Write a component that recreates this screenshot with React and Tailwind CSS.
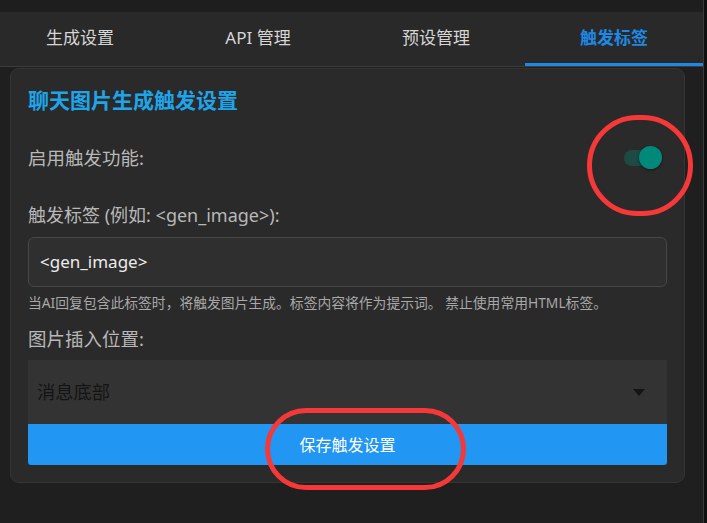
const tabs = ['生成设置', 'API 管理', '预设管理', '触发标签'];

function Toggle({ on }) {
  return (
    <div className="relative w-[38px] h-[24px] flex items-center">
      <div className={`w-[35px] h-[16px] rounded-full ${on ? 'bg-[#1e4a44]' : 'bg-[#555]'}`}></div>
      <div className="absolute right-0 top-0 w-[23px] h-[23px] rounded-full bg-[#00897b] shadow-[0_1px_3px_rgba(0,0,0,0.5)]"></div>
    </div>
  );
}

export default function App() {
  const active = 3;
  return (
    <div
      className="relative w-[707px] h-[523px] overflow-hidden bg-[#1f1f1f] flex"
      style={{ fontFamily: "'Noto Sans', 'Noto Sans CJK SC', sans-serif" }}
    >
      <div className="w-[703px] flex flex-col">
        <div className="h-[12px] bg-[#1e1e1e]"></div>
        {/* tab bar */}
        <div className="h-[55px] bg-[#292929] border-b border-[#3c3c3c] flex ml-[-9px]">
          {tabs.map((t, i) => (
            <div
              key={t}
              className={`w-[178px] shrink-0 flex items-center justify-center text-[17px] border-b-[3px] ${
                i === active
                  ? 'text-[#1e88e5] font-bold border-[#1e88e5]'
                  : 'text-[#d6d6d6] border-transparent'
              }`}
            >
              {t}
            </div>
          ))}
        </div>

        {/* card */}
        <div className="ml-[10px] mt-[1px] w-[675px] rounded-[9px] bg-[#2a2a2a] border border-[#353535] px-[17px] pt-[17px] pb-[17px]">
          <h2 className="text-[21px] leading-[28px] font-bold text-[#1ea5e9]">聊天图片生成触发设置</h2>

          <div className="mt-[22px] h-[44px] flex items-center justify-between pr-[5px]">
            <span className="text-[18.5px] text-[#b8b8b8]">启用触发功能:</span>
            <Toggle on />
          </div>

          <div className="mt-[23px] text-[18px] leading-[24px] text-[#b8b8b8]">触发标签 (例如: &lt;gen_image&gt;):</div>
          <div className="mt-[10px] h-[50px] rounded-[6px] bg-[#2f2f2f] border border-[#474747] flex items-center px-[11px] text-[17px] text-[#ececec]">
            &lt;gen_image&gt;
          </div>

          <p className="mt-[7px] text-[13.8px] leading-[18px] text-[#a8a8a8] whitespace-nowrap">
            当AI回复包含此标签时，将触发图片生成。标签内容将作为提示词。 禁止使用常用HTML标签。
          </p>

          <div className="mt-[15px] text-[18.5px] leading-[24px] text-[#b8b8b8]">图片插入位置:</div>
          <div className="mt-[9px] h-[64px] bg-[#333333] flex items-center justify-between pl-[9px] pr-[22px]">
            <span className="text-[18.3px] text-[#141414]">消息底部</span>
            <svg width="12" height="7" viewBox="0 0 12 7">
              <path d="M0 0 L12 0 L6 7 Z" fill="#151515" />
            </svg>
          </div>
          <button className="w-full h-[41px] bg-[#2196f3] rounded-b-[3px] text-white text-[16px]">保存触发设置</button>
        </div>
      </div>

      {/* right edge strip */}
      <div className="w-[4px] bg-[#101010] border-l border-[#3a3a3a]"></div>

      {/* annotation circles */}
      <div className="absolute left-[587px] top-[115px] w-[106px] h-[101px] rounded-full border-[5px] border-[#f73838]"></div>
      <div className="absolute left-[265px] top-[408px] w-[201px] h-[82px] rounded-full border-[5px] border-[#f73838]"></div>
    </div>
  );
}
